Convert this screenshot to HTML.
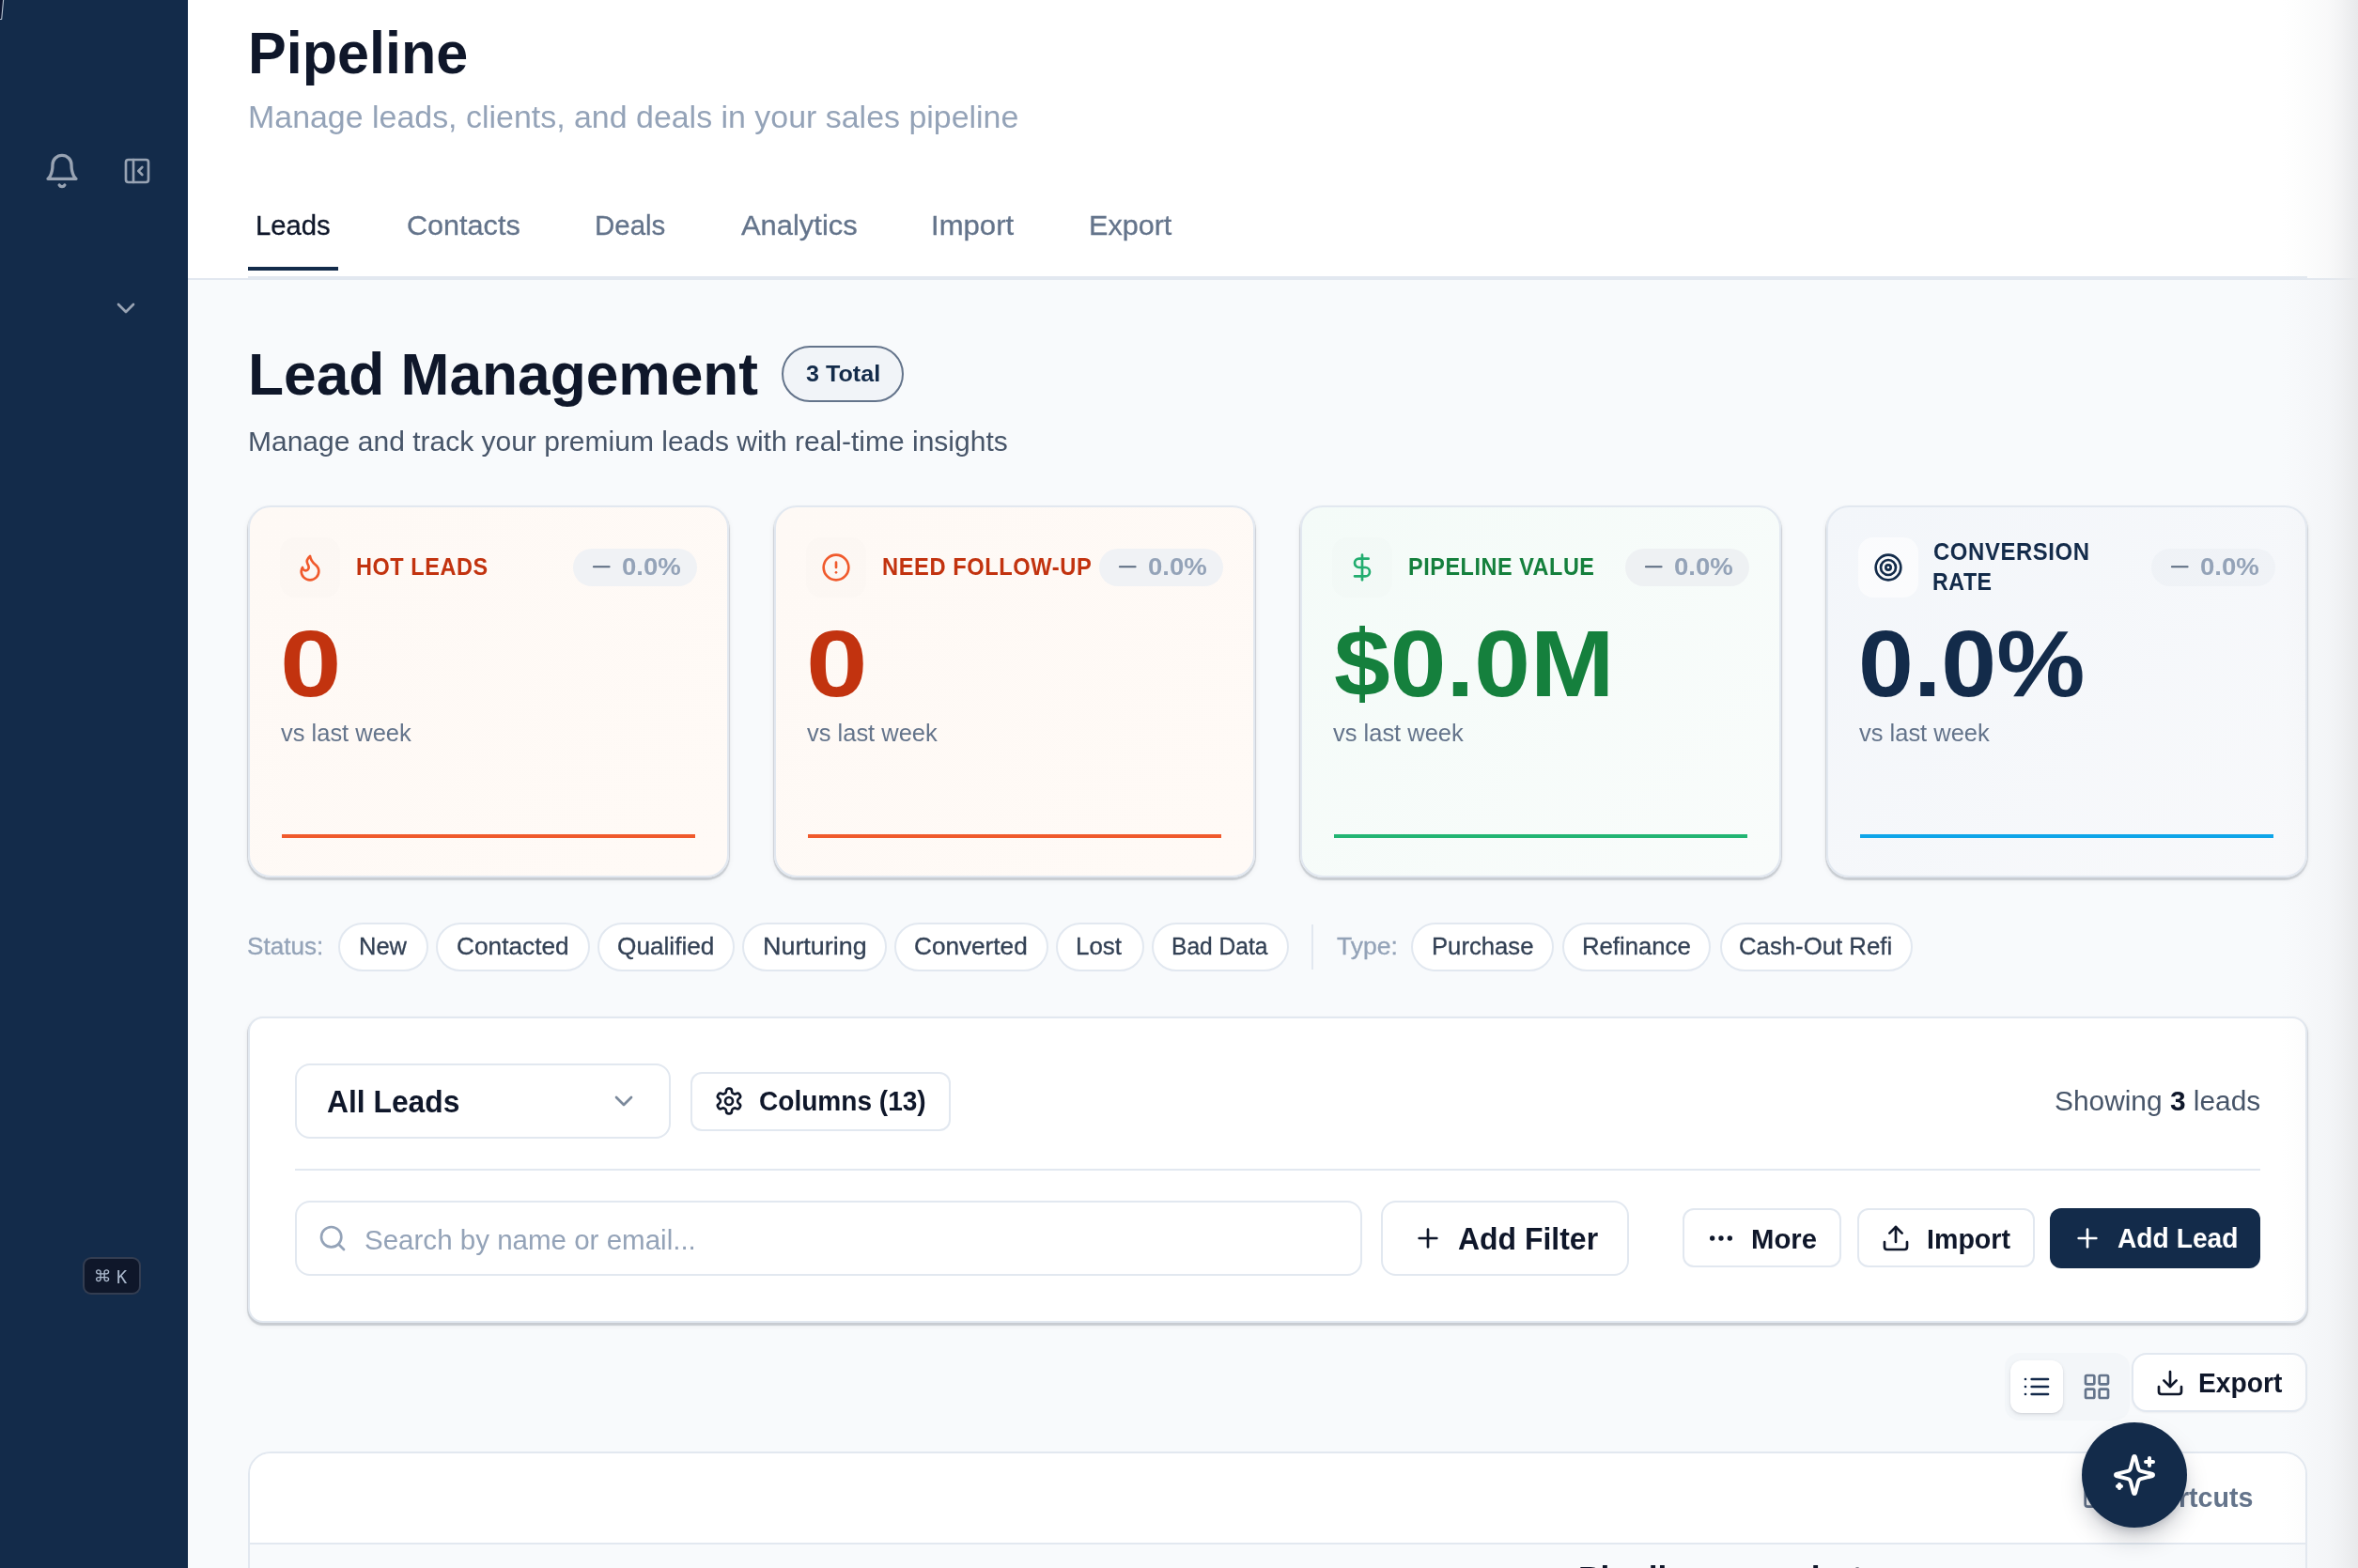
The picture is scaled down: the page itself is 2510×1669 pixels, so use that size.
<!DOCTYPE html>
<html lang="en">
<head>
<meta charset="utf-8">
<title>Pipeline</title>
<style>
*{box-sizing:border-box;margin:0;padding:0}
html,body{width:2510px;height:1669px;overflow:hidden;background:#f8fafc}
body{font-family:"Liberation Sans",Arial,sans-serif;color:#0f172a;position:relative}
#app{position:absolute;left:0;top:0;width:2510px;height:1669px;overflow:hidden;background:#f8fafc;will-change:transform}
.abs{position:absolute}
.t{position:absolute;white-space:nowrap;line-height:1;display:block;transform-origin:0 50%}
.b{font-weight:700}
svg.i{position:absolute;fill:none;stroke:currentColor;stroke-width:2;stroke-linecap:round;stroke-linejoin:round}
.sidebar{left:0;top:0;width:200px;height:1669px;background:#13294a}
.header{left:200px;top:0;width:2310px;height:298px;background:#fff;border-bottom:2px solid #e8edf3}
.card{border:2px solid #e2e8f0;border-radius:24px;box-shadow:0 2px 1px 1px rgba(15,23,42,.16),0 3px 6px rgba(15,23,42,.07)}
.ibox{width:64px;height:64px;border-radius:16px}
.pill{border-radius:999px}
.chip{border:2px solid #e2e8f0;border-radius:26px;background:#fff}
.btn{border:2px solid #e2e8f0;background:#fff}
#h1{left:264.15px;top:25px;transform:scaleX(0.9620)}
#sub1{left:264.36px;top:108px;transform:scaleX(1.0160)}
#tab0{left:272.21px;top:225px;transform:scaleX(0.9923)}
#tab1{left:432.76px;top:225px;transform:scaleX(1.0368)}
#tab2{left:633.2px;top:225px;transform:scaleX(0.9986)}
#tab3{left:789px;top:225px;transform:scaleX(1.0479)}
#tab4{left:991.48px;top:225px;transform:scaleX(1.0543)}
#tab5{left:1158.93px;top:225px;transform:scaleX(1.0361)}
#kbd1{left:101.16px;top:1346.5px;transform:scaleX(1.1000)}
#kbd2{left:124.06px;top:1350.2px;transform:scaleX(0.9364)}
#h2{left:264.08px;top:366.9px;transform:scaleX(0.9803)}
#total{left:857.57px;top:385.7px;transform:scaleX(1.0270)}
#sub2{left:263.74px;top:455.9px;transform:scaleX(1.0279)}
#lab0{left:378.68px;top:590.9px;transform:scaleX(0.9358)}
#pct0{left:662.48px;top:590.9px;transform:scaleX(1.0982)}
#val0{left:297.74px;top:656.4px;transform:scaleX(1.1729)}
#vs0{left:298.8px;top:768px;transform:scaleX(1.0191)}
#lab1{left:938.67px;top:590.9px;transform:scaleX(0.9440)}
#pct1{left:1222.48px;top:590.9px;transform:scaleX(1.0982)}
#val1{left:857.74px;top:656.4px;transform:scaleX(1.1729)}
#vs1{left:858.8px;top:768px;transform:scaleX(1.0191)}
#lab2{left:1498.68px;top:590.9px;transform:scaleX(0.9324)}
#pct2{left:1782.48px;top:590.9px;transform:scaleX(1.0982)}
#val2{left:1419.66px;top:656.4px;transform:scaleX(1.0683)}
#vs2{left:1418.8px;top:768px;transform:scaleX(1.0191)}
#lab3a{left:2057.63px;top:575px;transform:scaleX(0.9535)}
#lab3b{left:2056.73px;top:606.6px;transform:scaleX(0.9242)}
#pct3{left:2342.48px;top:590.9px;transform:scaleX(1.0982)}
#val3{left:1977.58px;top:656.4px;transform:scaleX(1.0541)}
#vs3{left:1978.8px;top:768px;transform:scaleX(1.0191)}
#status{left:263.34px;top:995px;transform:scaleX(1.0307)}
#chip0{left:381.79px;top:995px;transform:scaleX(1.0061)}
#chip1{left:485.96px;top:995px;transform:scaleX(1.0372)}
#chip2{left:656.95px;top:995px;transform:scaleX(1.0361)}
#chip3{left:811.7px;top:995px;transform:scaleX(1.0634)}
#chip4{left:973.36px;top:995px;transform:scaleX(1.0342)}
#chip5{left:1145.36px;top:995px;transform:scaleX(1.0239)}
#chip6{left:1247.24px;top:995px;transform:scaleX(0.9721)}
#chip7{left:1523.57px;top:995px;transform:scaleX(1.0144)}
#chip8{left:1683.56px;top:995px;transform:scaleX(1.0162)}
#chip9{left:1851.18px;top:995px;transform:scaleX(1.0178)}
#type{left:1422.98px;top:995px;transform:scaleX(1.0492)}
#allleads{left:348.21px;top:1156px;transform:scaleX(0.9634)}
#cols{left:808.03px;top:1157.8px;transform:scaleX(0.9674)}
#showing{left:2186.97px;top:1156.7px;transform:scaleX(1.0198)}
#ph{left:387.83px;top:1305px;transform:scaleX(0.9842)}
#addf{left:1551.82px;top:1302px;transform:scaleX(0.9680)}
#more{left:1864.41px;top:1303.7px;transform:scaleX(0.9926)}
#imp{left:2050.86px;top:1303.7px;transform:scaleX(0.9697)}
#addl{left:2254.22px;top:1303px;transform:scaleX(0.9561)}
#exp{left:2340.46px;top:1457.9px;transform:scaleX(0.9730)}
#short{left:2265.03px;top:1579px;transform:scaleX(0.9689)}
#snap{left:1679.64px;top:1663.2px;transform:scaleX(1.1793)}
</style>
</head>
<body>
<div id="app">
<div class="abs " style="left:200px;top:0px;width:2310px;height:298px;background:#fff"></div>
<div class="abs " style="left:200px;top:296px;width:2310px;height:2px;background:#e2e8f0"></div>
<div class="abs " style="left:264px;top:294px;width:2192px;height:2px;background:#e2e8f0"></div>
<h1 id="h1" class="t b" style="font-size:63.5px;color:#0f172a;">Pipeline</h1>
<span id="sub1" class="t" style="font-size:33.4px;color:#94a3b8;">Manage leads, clients, and deals in your sales pipeline</span>
<span id="tab0" class="t" style="font-size:29.5px;color:#0f172a;-webkit-text-stroke:0.3px #0f172a;">Leads</span>
<span id="tab1" class="t" style="font-size:29.5px;color:#64748b;-webkit-text-stroke:0.3px #64748b;">Contacts</span>
<span id="tab2" class="t" style="font-size:29.5px;color:#64748b;-webkit-text-stroke:0.3px #64748b;">Deals</span>
<span id="tab3" class="t" style="font-size:29.5px;color:#64748b;-webkit-text-stroke:0.3px #64748b;">Analytics</span>
<span id="tab4" class="t" style="font-size:29.5px;color:#64748b;-webkit-text-stroke:0.3px #64748b;">Import</span>
<span id="tab5" class="t" style="font-size:29.5px;color:#64748b;-webkit-text-stroke:0.3px #64748b;">Export</span>
<div class="abs " style="left:264px;top:284px;width:96px;height:4px;background:#132b4a"></div>
<div class="abs " style="left:0px;top:0px;width:200px;height:1669px;background:#132b4a"></div>
<svg class="i" viewBox="0 0 8 24" style="left:0;top:0;width:8px;height:24px;color:#b9c4d2;stroke-width:1.1"><path d="M0 0H3.4L1.4 20.4H0z" fill="#0b1530" stroke="none"/><path d="M3.7 -1 L1.7 20.5 L-1 20.5"/></svg>
<svg class="i" viewBox="0 0 24 24" style="left:45.5px;top:161.5px;width:40px;height:40px;color:#98a3b3;stroke-width:2;"><path d="M6 8a6 6 0 0 1 12 0c0 7 3 9 3 9H3s3-2 3-9"/><path d="M10.3 21a1.94 1.94 0 0 0 3.4 0"/></svg>
<svg class="i" viewBox="0 0 24 24" style="left:129.5px;top:166px;width:32px;height:32px;color:#98a3b3;stroke-width:2;"><rect width="18" height="18" x="3" y="3" rx="2"/><path d="M9 3v18"/><path d="m16 15-3-3 3-3"/></svg>
<svg class="i" viewBox="0 0 24 24" style="left:117.5px;top:311.5px;width:32px;height:32px;color:#98a3b3;stroke-width:2;"><path d="m6 9 6 6 6-6"/></svg>
<div class="abs " style="left:88px;top:1338px;width:62px;height:40px;background:#0f172a;border:2px solid rgba(148,163,184,.28);border-radius:9px"></div>
<span id="kbd1" class="t" style="font-size:24.5px;color:#a9b7cb;font-family:&quot;DejaVu Sans Mono&quot;,&quot;Liberation Mono&quot;,monospace;">⌘</span>
<span id="kbd2" class="t" style="font-size:19.8px;color:#a9b7cb;font-family:&quot;DejaVu Sans Mono&quot;,&quot;Liberation Mono&quot;,monospace;">K</span>
<h2 id="h2" class="t b" style="font-size:63.5px;color:#0f172a;">Lead Management</h2>
<div class="abs " style="left:832px;top:368px;width:130px;height:59.5px;border:2px solid #64748b;border-radius:30px;background:rgba(226,232,240,.3)"></div>
<span id="total" class="t b" style="font-size:24.5px;color:#132b4a;">3 Total</span>
<span id="sub2" class="t" style="font-size:29.2px;color:#475569;">Manage and track your premium leads with real-time insights</span>
<div class="abs card" style="left:264px;top:538px;width:512px;height:396px;background:linear-gradient(135deg,#fef9f5,#fffaf6)"></div>
<div class="abs ibox" style="left:298px;top:572px;width:64px;height:64px;background:rgba(100,116,139,.016)"></div>
<svg class="i" viewBox="0 0 24 24" style="left:314px;top:588px;width:32px;height:32px;color:#f05a2c;stroke-width:2;"><path d="M8.5 14.5A2.5 2.5 0 0 0 11 12c0-1.38-.5-2-1-3-1.072-2.143-.224-4.054 2-6 .5 2.5 2 4.9 4 6.5 2 1.6 3 3.5 3 5.5a7 7 0 1 1-14 0c0-1.153.433-2.294 1-3a2.5 2.5 0 0 0 2.5 2.5z"/></svg>
<span id="lab0" class="t b" style="font-size:25.1px;color:#c2330f;letter-spacing:.6px;">HOT LEADS</span>
<div class="abs pill" style="left:609.7px;top:584px;width:132.3px;height:40px;background:#f0f2f5"></div>
<svg class="i" viewBox="0 0 24 24" style="left:625.55px;top:589.3px;width:28.5px;height:28.5px;color:#5b6b80;stroke-width:1.8;"><path d="M5 12h14"/></svg>
<span id="pct0" class="t b" style="font-size:25.1px;color:#94a3b8;">0.0%</span>
<span id="val0" class="t b" style="font-size:100.5px;color:#c2330f;">0</span>
<span id="vs0" class="t" style="font-size:25px;color:#64748b;">vs last week</span>
<div class="abs " style="left:300px;top:888px;width:440px;height:4px;background:#f05a2c"></div>
<div class="abs card" style="left:824px;top:538px;width:512px;height:396px;background:linear-gradient(135deg,#fef9f5,#fffaf6)"></div>
<div class="abs ibox" style="left:858px;top:572px;width:64px;height:64px;background:rgba(100,116,139,.016)"></div>
<svg class="i" viewBox="0 0 24 24" style="left:874px;top:588px;width:32px;height:32px;color:#f05a2c;stroke-width:2;"><circle cx="12" cy="12" r="10"/><line x1="12" x2="12" y1="8" y2="12"/><line x1="12" x2="12.01" y1="16" y2="16"/></svg>
<span id="lab1" class="t b" style="font-size:25.1px;color:#c2330f;letter-spacing:.6px;">NEED FOLLOW-UP</span>
<div class="abs pill" style="left:1169.7px;top:584px;width:132.3px;height:40px;background:#f0f2f5"></div>
<svg class="i" viewBox="0 0 24 24" style="left:1185.55px;top:589.3px;width:28.5px;height:28.5px;color:#5b6b80;stroke-width:1.8;"><path d="M5 12h14"/></svg>
<span id="pct1" class="t b" style="font-size:25.1px;color:#94a3b8;">0.0%</span>
<span id="val1" class="t b" style="font-size:100.5px;color:#c2330f;">0</span>
<span id="vs1" class="t" style="font-size:25px;color:#64748b;">vs last week</span>
<div class="abs " style="left:860px;top:888px;width:440px;height:4px;background:#f05a2c"></div>
<div class="abs card" style="left:1384px;top:538px;width:512px;height:396px;background:linear-gradient(135deg,#f4fbf8,#f9fcfb)"></div>
<div class="abs ibox" style="left:1418px;top:572px;width:64px;height:64px;background:rgba(100,116,139,.016)"></div>
<svg class="i" viewBox="0 0 24 24" style="left:1434px;top:588px;width:32px;height:32px;color:#22ad6f;stroke-width:2;"><line x1="12" x2="12" y1="2" y2="22"/><path d="M17 5H9.5a3.5 3.5 0 0 0 0 7h5a3.5 3.5 0 0 1 0 7H6"/></svg>
<span id="lab2" class="t b" style="font-size:25.1px;color:#15803d;letter-spacing:.6px;">PIPELINE VALUE</span>
<div class="abs pill" style="left:1729.7px;top:584px;width:132.3px;height:40px;background:#eef1f3"></div>
<svg class="i" viewBox="0 0 24 24" style="left:1745.55px;top:589.3px;width:28.5px;height:28.5px;color:#5b6b80;stroke-width:1.8;"><path d="M5 12h14"/></svg>
<span id="pct2" class="t b" style="font-size:25.1px;color:#94a3b8;">0.0%</span>
<span id="val2" class="t b" style="font-size:100.5px;color:#15803d;">$0.0M</span>
<span id="vs2" class="t" style="font-size:25px;color:#64748b;">vs last week</span>
<div class="abs " style="left:1420px;top:888px;width:440px;height:4px;background:#22b573"></div>
<div class="abs card" style="left:1944px;top:538px;width:512px;height:396px;background:linear-gradient(135deg,#f3f6fa,#f8f9fb)"></div>
<div class="abs ibox" style="left:1978px;top:572px;width:64px;height:64px;background:rgba(255,255,255,.6)"></div>
<svg class="i" viewBox="0 0 24 24" style="left:1994px;top:588px;width:32px;height:32px;color:#132b4a;stroke-width:2;"><circle cx="12" cy="12" r="10"/><circle cx="12" cy="12" r="6"/><circle cx="12" cy="12" r="2"/></svg>
<span id="lab3a" class="t b" style="font-size:25.1px;color:#132b4a;letter-spacing:.6px;">CONVERSION</span>
<span id="lab3b" class="t b" style="font-size:25.1px;color:#132b4a;letter-spacing:.6px;">RATE</span>
<div class="abs pill" style="left:2289.7px;top:584px;width:132.3px;height:40px;background:rgba(226,232,240,.3)"></div>
<svg class="i" viewBox="0 0 24 24" style="left:2305.55px;top:589.3px;width:28.5px;height:28.5px;color:#5b6b80;stroke-width:1.8;"><path d="M5 12h14"/></svg>
<span id="pct3" class="t b" style="font-size:25.1px;color:#94a3b8;">0.0%</span>
<span id="val3" class="t b" style="font-size:100.5px;color:#132b4a;">0.0%</span>
<span id="vs3" class="t" style="font-size:25px;color:#64748b;">vs last week</span>
<div class="abs " style="left:1980px;top:888px;width:440px;height:4px;background:#0ea5e9"></div>
<span id="status" class="t" style="font-size:25.3px;color:#94a3b8;-webkit-text-stroke:0.3px #94a3b8;">Status:</span>
<div class="abs chip" style="left:360px;top:982px;width:96px;height:52px;"></div>
<span id="chip0" class="t" style="font-size:25.3px;color:#334155;-webkit-text-stroke:0.3px #334155;">New</span>
<div class="abs chip" style="left:464px;top:982px;width:164px;height:52px;"></div>
<span id="chip1" class="t" style="font-size:25.3px;color:#334155;-webkit-text-stroke:0.3px #334155;">Contacted</span>
<div class="abs chip" style="left:636px;top:982px;width:145.5px;height:52px;"></div>
<span id="chip2" class="t" style="font-size:25.3px;color:#334155;-webkit-text-stroke:0.3px #334155;">Qualified</span>
<div class="abs chip" style="left:790px;top:982px;width:154px;height:52px;"></div>
<span id="chip3" class="t" style="font-size:25.3px;color:#334155;-webkit-text-stroke:0.3px #334155;">Nurturing</span>
<div class="abs chip" style="left:952px;top:982px;width:164px;height:52px;"></div>
<span id="chip4" class="t" style="font-size:25.3px;color:#334155;-webkit-text-stroke:0.3px #334155;">Converted</span>
<div class="abs chip" style="left:1124px;top:982px;width:93.5px;height:52px;"></div>
<span id="chip5" class="t" style="font-size:25.3px;color:#334155;-webkit-text-stroke:0.3px #334155;">Lost</span>
<div class="abs chip" style="left:1226px;top:982px;width:146px;height:52px;"></div>
<span id="chip6" class="t" style="font-size:25.3px;color:#334155;-webkit-text-stroke:0.3px #334155;">Bad Data</span>
<div class="abs chip" style="left:1502px;top:982px;width:151.5px;height:52px;"></div>
<span id="chip7" class="t" style="font-size:25.3px;color:#334155;-webkit-text-stroke:0.3px #334155;">Purchase</span>
<div class="abs chip" style="left:1662.5px;top:982px;width:158.5px;height:52px;"></div>
<span id="chip8" class="t" style="font-size:25.3px;color:#334155;-webkit-text-stroke:0.3px #334155;">Refinance</span>
<div class="abs chip" style="left:1830.5px;top:982px;width:205.5px;height:52px;"></div>
<span id="chip9" class="t" style="font-size:25.3px;color:#334155;-webkit-text-stroke:0.3px #334155;">Cash-Out Refi</span>
<div class="abs " style="left:1396px;top:984px;width:2px;height:48px;background:#e2e8f0"></div>
<span id="type" class="t" style="font-size:25.3px;color:#94a3b8;-webkit-text-stroke:0.3px #94a3b8;">Type:</span>
<div class="abs card" style="left:264px;top:1082px;width:2192px;height:326px;background:#fff;border-radius:16px"></div>
<div class="abs btn" style="left:314px;top:1132px;width:400px;height:79.5px;border-radius:16px"></div>
<span id="allleads" class="t b" style="font-size:33px;color:#0f172a;">All Leads</span>
<svg class="i" viewBox="0 0 24 24" style="left:648px;top:1156.3px;width:32px;height:32px;color:#7c8a9c;stroke-width:2;"><path d="m6 9 6 6 6-6"/></svg>
<div class="abs btn" style="left:734.5px;top:1140.5px;width:277px;height:63px;border-radius:12px"></div>
<svg class="i" viewBox="0 0 24 24" style="left:759.8px;top:1156px;width:32px;height:32px;color:#0f172a;stroke-width:2;"><path d="M12.22 2h-.44a2 2 0 0 0-2 2v.18a2 2 0 0 1-1 1.73l-.43.25a2 2 0 0 1-2 0l-.15-.08a2 2 0 0 0-2.73.73l-.22.38a2 2 0 0 0 .73 2.73l.15.1a2 2 0 0 1 1 1.72v.51a2 2 0 0 1-1 1.74l-.15.09a2 2 0 0 0-.73 2.73l.22.38a2 2 0 0 0 2.73.73l.15-.08a2 2 0 0 1 2 0l.43.25a2 2 0 0 1 1 1.73V20a2 2 0 0 0 2 2h.44a2 2 0 0 0 2-2v-.18a2 2 0 0 1 1-1.73l.43-.25a2 2 0 0 1 2 0l.15.08a2 2 0 0 0 2.73-.73l.22-.39a2 2 0 0 0-.73-2.73l-.15-.08a2 2 0 0 1-1-1.74v-.5a2 2 0 0 1 1-1.74l.15-.09a2 2 0 0 0 .73-2.73l-.22-.38a2 2 0 0 0-2.73-.73l-.15.08a2 2 0 0 1-2 0l-.43-.25a2 2 0 0 1-1-1.73V4a2 2 0 0 0-2-2z"/><circle cx="12" cy="12" r="3"/></svg>
<span id="cols" class="t b" style="font-size:29px;color:#0f172a;">Columns (13)</span>
<span id="showing" class="t" style="font-size:29.3px;color:#475569;">Showing <b style="color:#0f172a">3</b> leads</span>
<div class="abs " style="left:314px;top:1243.5px;width:2092px;height:2px;background:#e2e8f0"></div>
<div class="abs btn" style="left:314px;top:1278px;width:1135.5px;height:79.5px;border-radius:16px"></div>
<svg class="i" viewBox="0 0 24 24" style="left:338.1px;top:1302.2px;width:32px;height:32px;color:#94a3b8;stroke-width:2;"><circle cx="11" cy="11" r="8"/><path d="m21 21-4.3-4.3"/></svg>
<span id="ph" class="t" style="font-size:30px;color:#94a3b8;">Search by name or email...</span>
<div class="abs btn" style="left:1470px;top:1278px;width:264px;height:79.5px;border-radius:16px"></div>
<svg class="i" viewBox="0 0 24 24" style="left:1504.2px;top:1302.4px;width:32px;height:32px;color:#0f172a;stroke-width:2;"><path d="M5 12h14"/><path d="M12 5v14"/></svg>
<span id="addf" class="t b" style="font-size:33px;color:#0f172a;">Add Filter</span>
<div class="abs btn" style="left:1791px;top:1286px;width:169px;height:63px;border-radius:12px"></div>
<svg class="i" viewBox="0 0 24 24" style="left:1816.1px;top:1302.3px;width:32px;height:32px;color:#0f172a;stroke-width:2;"><circle cx="12" cy="12" r="1"/><circle cx="19" cy="12" r="1"/><circle cx="5" cy="12" r="1"/></svg>
<span id="more" class="t b" style="font-size:29.5px;color:#0f172a;">More</span>
<div class="abs btn" style="left:1976.5px;top:1286px;width:189px;height:63px;border-radius:12px"></div>
<svg class="i" viewBox="0 0 24 24" style="left:2002px;top:1302.2px;width:32px;height:32px;color:#0f172a;stroke-width:2;"><path d="M21 15v4a2 2 0 0 1-2 2H5a2 2 0 0 1-2-2v-4"/><polyline points="17 8 12 3 7 8"/><line x1="12" x2="12" y1="3" y2="15"/></svg>
<span id="imp" class="t b" style="font-size:29.5px;color:#0f172a;">Import</span>
<div class="abs " style="left:2182px;top:1286px;width:224px;height:63.5px;border-radius:12px;background:#132b4a"></div>
<svg class="i" viewBox="0 0 24 24" style="left:2205.9px;top:1302.1px;width:32px;height:32px;color:#fff;stroke-width:2;"><path d="M5 12h14"/><path d="M12 5v14"/></svg>
<span id="addl" class="t b" style="font-size:29.5px;color:#fff;">Add Lead</span>
<div class="abs " style="left:2133.7px;top:1440px;width:133.2px;height:71.6px;background:#f3f6f9;border-radius:16px"></div>
<div class="abs " style="left:2140px;top:1448px;width:56px;height:56px;background:#fff;border-radius:12px;box-shadow:0 2px 4px rgba(15,23,42,.10),0 1px 2px rgba(15,23,42,.06)"></div>
<svg class="i" viewBox="0 0 24 24" style="left:2151.8px;top:1460px;width:32px;height:32px;color:#13294a;stroke-width:2;"><line x1="8" x2="21" y1="6" y2="6"/><line x1="8" x2="21" y1="12" y2="12"/><line x1="8" x2="21" y1="18" y2="18"/><line x1="3" x2="3.01" y1="6" y2="6"/><line x1="3" x2="3.01" y1="12" y2="12"/><line x1="3" x2="3.01" y1="18" y2="18"/></svg>
<svg class="i" viewBox="0 0 24 24" style="left:2216.1px;top:1460.2px;width:32px;height:32px;color:#64748b;stroke-width:2;"><rect width="7" height="7" x="3" y="3" rx="1"/><rect width="7" height="7" x="14" y="3" rx="1"/><rect width="7" height="7" x="14" y="14" rx="1"/><rect width="7" height="7" x="3" y="14" rx="1"/></svg>
<div class="abs btn" style="left:2269px;top:1440px;width:187px;height:63px;border-radius:16px;box-shadow:0 1px 2px rgba(15,23,42,.05)"></div>
<svg class="i" viewBox="0 0 24 24" style="left:2294px;top:1456.2px;width:32px;height:32px;color:#0f172a;stroke-width:2;"><path d="M21 15v4a2 2 0 0 1-2 2H5a2 2 0 0 1-2-2v-4"/><polyline points="7 10 12 15 17 10"/><line x1="12" x2="12" y1="15" y2="3"/></svg>
<span id="exp" class="t b" style="font-size:29px;color:#0f172a;">Export</span>
<div class="abs " style="left:264px;top:1544.5px;width:2192px;height:200px;background:#f8fafc;border:2px solid #e2e8f0;border-radius:24px;overflow:hidden"><div style="height:97.5px;background:#fff;border-bottom:2px solid #e2e8f0"></div></div>
<svg class="i" viewBox="0 0 24 24" style="left:2217.3px;top:1577px;width:32px;height:32px;color:#64748b;stroke-width:2;"><path d="M10 8h.01"/><path d="M12 12h.01"/><path d="M14 8h.01"/><path d="M16 12h.01"/><path d="M18 8h.01"/><path d="M6 8h.01"/><path d="M7 16h10"/><path d="M8 12h.01"/><rect width="20" height="16" x="2" y="4" rx="2"/></svg>
<span id="short" class="t b" style="font-size:29.5px;color:#64748b;">Shortcuts</span>
<span id="snap" class="t b" style="font-size:30px;color:#0f172a;">Pipeline snapshot</span>
<div class="abs " style="left:2216px;top:1514px;width:112px;height:112px;background:#132b4a;border-radius:56px;box-shadow:0 14px 26px -4px rgba(15,23,42,.25),0 6px 10px -4px rgba(15,23,42,.18)"></div>
<svg class="i" viewBox="0 0 24 24" style="left:2248px;top:1546.3px;width:48px;height:48px;color:#fff;stroke-width:2;"><path d="M9.937 15.5A2 2 0 0 0 8.5 14.063l-6.135-1.582a.5.5 0 0 1 0-.962L8.5 9.936A2 2 0 0 0 9.937 8.5l1.582-6.135a.5.5 0 0 1 .963 0L14.063 8.5A2 2 0 0 0 15.5 9.937l6.135 1.581a.5.5 0 0 1 0 .964L15.5 14.063a2 2 0 0 0-1.437 1.437l-1.582 6.135a.5.5 0 0 1-.963 0z"/><path d="M20 3v4"/><path d="M22 5h-4"/><path d="M4 17v2"/><path d="M5 18H3"/></svg>
<div class="abs " style="left:2430px;top:0px;width:80px;height:1669px;background:linear-gradient(90deg,rgba(232,233,235,0) 0%,rgba(232,233,235,.12) 30%,rgba(232,233,235,.28) 60%,rgba(232,233,235,.5) 76%,rgba(232,233,235,.8) 90%,rgba(232,233,235,1) 100%)"></div>
</div>
</body>
</html>
